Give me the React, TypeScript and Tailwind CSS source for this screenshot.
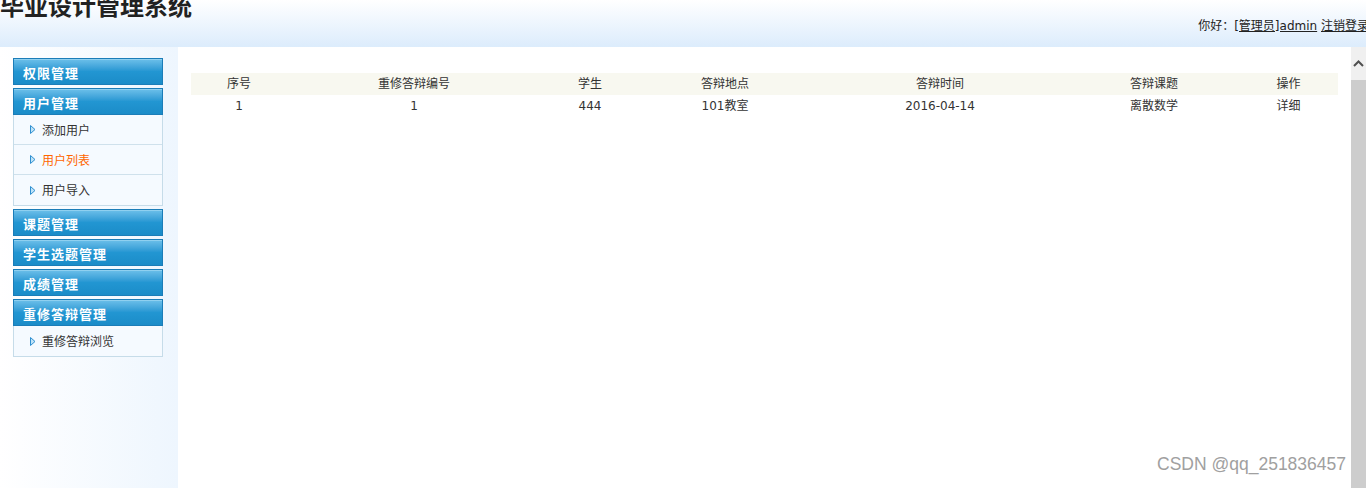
import React from "react";

type MenuGroup = {
  title: string;
  items?: { label: string; active?: boolean }[];
};

const menu: MenuGroup[] = [
  { title: "权限管理" },
  {
    title: "用户管理",
    items: [{ label: "添加用户" }, { label: "用户列表", active: true }, { label: "用户导入" }],
  },
  { title: "课题管理" },
  { title: "学生选题管理" },
  { title: "成绩管理" },
  { title: "重修答辩管理", items: [{ label: "重修答辩浏览" }] },
];

const columns = [
  { label: "序号", w: "w-[96px]" },
  { label: "重修答辩编号", w: "w-[254px]" },
  { label: "学生", w: "w-[98px]" },
  { label: "答辩地点", w: "w-[172px]" },
  { label: "答辩时间", w: "w-[258px]" },
  { label: "答辩课题", w: "w-[170px]" },
  { label: "操作", w: "w-[99px]" },
];

const rows = [["1", "1", "444", "101教室", "2016-04-14", "离散数学", "详细"]];

const cjk = "font-['DejaVu_Sans','Noto_Sans_CJK_SC',sans-serif]";

function Arrow() {
  return (
    <svg width="6" height="9" viewBox="0 0 6 9" className="shrink-0">
      <path d="M0.5 0.5 L5 4.5 L0.5 8.5 Z" fill="#bfe3f8" stroke="#2f8fd0" strokeWidth="1" />
    </svg>
  );
}

function Sidebar() {
  return (
    <div className="w-[178px] shrink-0 bg-gradient-to-r from-white to-[#eef6fe] pl-[13px] pt-[11px]">
      {menu.map((g) => (
        <div key={g.title} className="w-[150px] mb-[3px]">
          <div className="h-[27px] border border-[#1b7db8] bg-gradient-to-b from-[#6cc0ea] via-[#2296d2] to-[#1b8cc8] shadow-[inset_0_1px_0_#8fd0f0] pl-[9px] pt-[5px] text-[13px] font-bold leading-[18px] tracking-[1px] text-white font-['Noto_Sans_CJK_SC',sans-serif]">
            {g.title}
          </div>
          {g.items && (
            <div className="border-x border-b border-[#c6dce9] bg-[#f5faff]">
              {g.items.map((it, i) => (
                <div
                  key={it.label}
                  className={`flex h-[30px] items-center gap-[6px] pl-[16px] text-[12px] ${
                    i < g.items!.length - 1 ? "border-b border-[#cfe1ec]" : ""
                  } ${it.active ? "text-[#ff6600]" : "text-[#333333]"} font-['Noto_Sans_CJK_SC',sans-serif]`}
                >
                  <Arrow />
                  <span>{it.label}</span>
                </div>
              ))}
            </div>
          )}
        </div>
      ))}
    </div>
  );
}

function Scrollbar() {
  return (
    <div className="flex w-[15px] shrink-0 flex-col bg-[#f0f0f0]">
      <div className="flex h-[33px] items-center justify-center">
        <svg width="11" height="7" viewBox="0 0 11 7">
          <path d="M1 6 L5.5 1.5 L10 6" fill="none" stroke="#505050" strokeWidth="2" />
        </svg>
      </div>
      <div className="flex-1 bg-[#cdcdcd]" />
    </div>
  );
}

export default function App() {
  return (
    <div className={`relative h-[488px] w-[1366px] overflow-hidden bg-white ${cjk}`}>
      <div className="flex h-[47px] items-start justify-between bg-gradient-to-b from-white to-[#dcecfc]">
        <div className="-mt-[10px] text-[24px] font-bold leading-[30px] text-[#222222] font-['Noto_Sans_CJK_SC',sans-serif]">
          毕业设计管理系统
        </div>
        <div className="-mr-[3px] mt-[18px] whitespace-nowrap text-[12px] leading-[16px] text-[#222222]">
          你好：<span className="underline">[管理员]admin</span>{" "}
          <span className="underline">注销登录</span>
        </div>
      </div>
      <div className="flex h-[441px]">
        <Sidebar />
        <div className="flex-1 bg-white px-[13px] pt-[26px]">
          <table className="w-[1147px] table-fixed border-collapse text-[12px] text-[#333333]">
            <thead>
              <tr className="h-[22px] bg-[#f8f8f0]">
                {columns.map((c) => (
                  <th key={c.label} className={`${c.w} p-0 text-center font-normal`}>
                    {c.label}
                  </th>
                ))}
              </tr>
            </thead>
            <tbody>
              {rows.map((r, i) => (
                <tr key={i} className="h-[22px]">
                  {r.map((v, j) => (
                    <td key={j} className="p-0 text-center">
                      {v}
                    </td>
                  ))}
                </tr>
              ))}
            </tbody>
          </table>
        </div>
        <Scrollbar />
      </div>
      <div className="absolute left-[1157px] top-[451px] text-[17.5px] text-[#a0a0a0] font-['Liberation_Sans',sans-serif]">
        CSDN @qq_251836457
      </div>
    </div>
  );
}
